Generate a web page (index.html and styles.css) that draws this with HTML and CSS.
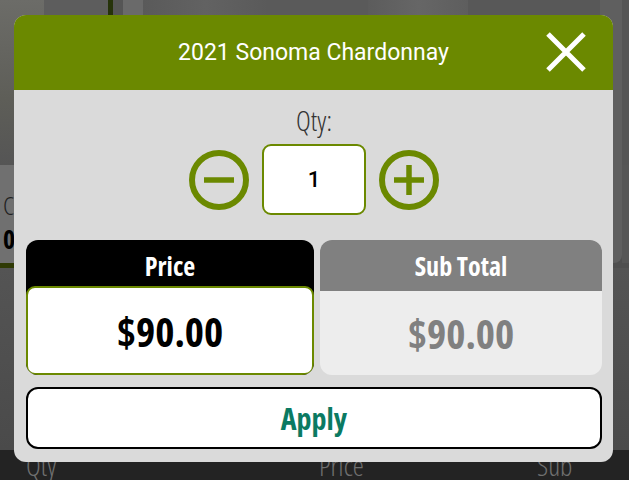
FILE: index.html
```html
<!DOCTYPE html>
<html lang="en">
<head>
<meta charset="utf-8">
<title>2021 Sonoma Chardonnay</title>
<link rel="stylesheet" href="styles.css">
</head>
<body>
<div class="page">
  <div class="bg-main">
    <div class="bg-tiles">
      <div class="tile tile-a"></div>
      <div class="tile tile-b"></div>
      <div class="tile tile-line"></div>
      <div class="tile tile-c"></div>
      <div class="tile tile-d"></div>
      <div class="tile tile-e"></div>
      <div class="tile tile-f"></div>
      <div class="tile tile-g"></div>
      <div class="tile tile-h"></div>
      <div class="tile tile-card"></div>
      <div class="tile tile-end"></div>
    </div>
    <div class="bg-info">
      <div class="info-card">
        <span class="info-name">C</span>
        <span class="info-price">0</span>
      </div>
      <div class="info-gap"></div>
      <div class="info-right"></div>
      <div class="info-end"></div>
    </div>
    <div class="bg-line"></div>
    <div class="bg-rest"></div>
  </div>
  <div class="bottom-bar">
    <span class="bb-qty">Qty</span>
    <span class="bb-price">Price</span>
    <span class="bb-sub">Sub</span>
  </div>
</div>

<div class="modal">
  <div class="modal-header">
    <h1 class="modal-title">2021 Sonoma Chardonnay</h1>
    <button class="close-btn" aria-label="Close">
      <svg width="42" height="42" viewBox="0 0 42 42"><path d="M3 3 L39 39 M39 3 L3 39" stroke="#fff" stroke-width="5" fill="none"/></svg>
    </button>
  </div>
  <div class="modal-body">
    <div class="qty-label">Qty:</div>
    <div class="qty-row">
      <button class="round-btn" aria-label="Decrease">
        <svg width="60" height="60" viewBox="0 0 60 60"><circle cx="30" cy="30" r="27" stroke="#6b8900" stroke-width="6" fill="none"/><path d="M15 30 H45" stroke="#6b8900" stroke-width="5.5"/></svg>
      </button>
      <div class="qty-input">1</div>
      <button class="round-btn" aria-label="Increase">
        <svg width="60" height="60" viewBox="0 0 60 60"><circle cx="30" cy="30" r="27" stroke="#6b8900" stroke-width="6" fill="none"/><path d="M15 30 H45 M30 15 V45" stroke="#6b8900" stroke-width="5.5"/></svg>
      </button>
    </div>
    <div class="totals">
      <div class="box box-price">
        <div class="box-head">Price</div>
        <div class="box-value">$90.00</div>
      </div>
      <div class="box box-sub">
        <div class="box-head">Sub Total</div>
        <div class="box-value">$90.00</div>
      </div>
    </div>
    <button class="apply-btn">Apply</button>
  </div>
</div>
</body>
</html>
```

FILE: styles.css
```css
* { box-sizing: border-box; }
html, body { margin: 0; padding: 0; }
body {
  width: 629px;
  height: 480px;
  overflow: hidden;
  position: relative;
  font-family: "Open Sans", "DejaVu Sans", sans-serif;
  background: #4f4f4f;
}

/* ---------- background page (dimmed) ---------- */
.page {
  display: flex;
  flex-direction: column;
  height: 480px;
}
.bg-main {
  flex: 1;
  display: flex;
  flex-direction: column;
}
.bg-tiles {
  height: 165px;
  display: flex;
}
.tile { height: 100%; }
.tile-a { width: 44px; background: linear-gradient(180deg, #6c6c68 0%, #5e5e58 60%, #555 100%); }
.tile-b { width: 64px; background: #5d5d5d; }
.tile-line { width: 5px; background: #26330a; }
.tile-c { width: 10px; background: #555; }
.tile-d { width: 20px; background: #6a6a6a; }
.tile-e { width: 125px; background: linear-gradient(90deg, #5a5a5a, #626262 50%, #5a5a5a); }
.tile-f { width: 100px; background: #5a5a5a; }
.tile-g { width: 100px; background: linear-gradient(90deg, #5c5c5c, #666 50%, #5e5e5e); }
.tile-h { flex: 1; background: #585858; }
.tile-card { width: 22px; background: #5f5f5f; }
.tile-end { width: 7px; background: #555; }

.bg-info {
  height: 98px;
  display: flex;
}
.info-card {
  width: 300px;
  background: #707070;
  display: flex;
  flex-direction: column;
  padding: 22px 0 0 3px;
  font-stretch: 75%;
}
.info-name { font-size: 26px; font-weight: 300; color: #222; line-height: 36px; }
.info-price { font-size: 26px; font-weight: 700; color: #000; line-height: 32px; }
.info-gap { flex: 1; background: #565656; }
.info-right { width: 22px; background: #5f5f5f; border-bottom-right-radius: 8px; }
.info-end { width: 7px; background: #565656; }
.bg-line { height: 5px; width: 300px; background: #2f3a05; }
.bg-rest { flex: 1; background: linear-gradient(180deg, #545454, #4a4a4a); }

.bottom-bar {
  height: 30px;
  background: #232323;
  display: flex;
  align-items: flex-start;
  font-stretch: 75%;
  font-weight: 300;
  font-size: 28px;
  color: #707070;
  line-height: 30px;
  padding-left: 26px;
}
.bb-qty { width: 293px; }
.bb-price { width: 218px; }

/* ---------- modal ---------- */
.modal {
  position: absolute;
  left: 14px;
  top: 15px;
  width: 599px;
  height: 447px;
  border-radius: 12px;
  background: #dadada;
  overflow: hidden;
  display: flex;
  flex-direction: column;
}
.modal-header {
  height: 75px;
  background: #6b8900;
  display: flex;
  align-items: center;
  justify-content: center;
  position: relative;
}
.modal-title {
  margin: 0;
  font-family: Roboto, "Liberation Sans", sans-serif;
  font-weight: 400;
  font-size: 23px;
  color: #fff;
}
.close-btn {
  position: absolute;
  right: 26px;
  top: 16px;
  width: 42px;
  height: 42px;
  padding: 0;
  border: 0;
  background: none;
  display: block;
}
.close-btn svg { display: block; }

.modal-body {
  flex: 1;
  display: flex;
  flex-direction: column;
  align-items: center;
  padding: 12px 11px 13px 12px;
}
.qty-label {
  font-stretch: 75%;
  font-weight: 300;
  font-size: 28px;
  line-height: 36px;
  color: #333;
  margin-bottom: 6px;
}
.qty-row {
  display: flex;
  align-items: center;
  gap: 13px;
  margin-bottom: 25px;
}
.round-btn {
  width: 60px;
  height: 60px;
  padding: 0;
  border: 0;
  background: none;
}
.round-btn svg { display: block; }
.qty-input {
  width: 104px;
  height: 71px;
  background: #fff;
  border: 2px solid #6b8900;
  border-radius: 9px;
  display: flex;
  align-items: center;
  justify-content: center;
  font-family: Roboto, "Liberation Sans", sans-serif;
  font-weight: 500;
  font-size: 22px;
  color: #000;
}

.totals {
  display: grid;
  grid-template-columns: 288px 282px;
  gap: 6px;
  width: 100%;
  margin-bottom: 12px;
}
.box {
  height: 135px;
  border-radius: 12px;
  overflow: hidden;
  display: flex;
  flex-direction: column;
  font-stretch: 75%;
  font-weight: 700;
  text-align: center;
}
.box-head {
  height: 51px;
  display: flex;
  align-items: center;
  justify-content: center;
  color: #fff;
  font-size: 26px;
}
.box-value {
  flex: 1;
  display: flex;
  align-items: center;
  justify-content: center;
  font-size: 41px;
}
.box-price { background: #000; }
.box-price .box-value {
  margin-top: -5px;
  background: #fff;
  border: 2px solid #6b8900;
  border-radius: 9px;
  color: #000;
}
.box-sub { background: #ededed; }
.box-sub .box-head { background: #808080; }
.box-sub .box-value { color: #808080; }

.apply-btn {
  width: 100%;
  height: 62px;
  background: #fff;
  border: 2px solid #000;
  border-radius: 12px;
  font-family: "Open Sans", "DejaVu Sans", sans-serif;
  font-stretch: 75%;
  font-weight: 700;
  font-size: 30px;
  color: #0b7a62;
  padding: 0;
}
```
